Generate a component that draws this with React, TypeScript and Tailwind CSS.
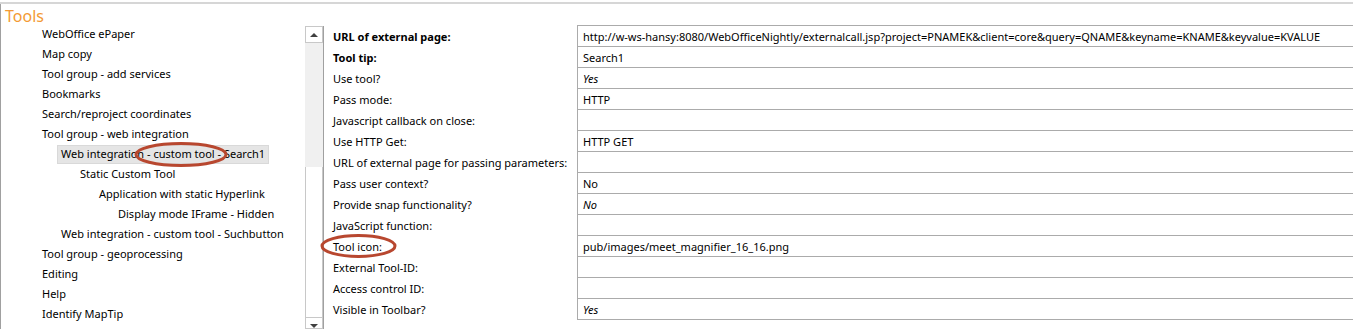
import React from 'react';

type TreeItem = { label: string; level: number; selected?: boolean };

const treeItems: TreeItem[] = [
  { label: 'WebOffice ePaper', level: 1 },
  { label: 'Map copy', level: 1 },
  { label: 'Tool group - add services', level: 1 },
  { label: 'Bookmarks', level: 1 },
  { label: 'Search/reproject coordinates', level: 1 },
  { label: 'Tool group - web integration', level: 1 },
  { label: 'Web integration - custom tool - Search1', level: 2, selected: true },
  { label: 'Static Custom Tool', level: 3 },
  { label: 'Application with static Hyperlink', level: 4 },
  { label: 'Display mode IFrame - Hidden', level: 5 },
  { label: 'Web integration - custom tool - Suchbutton', level: 2 },
  { label: 'Tool group - geoprocessing', level: 1 },
  { label: 'Editing', level: 1 },
  { label: 'Help', level: 1 },
  { label: 'Identify MapTip', level: 1 },
];

type Prop = { label: string; value?: string; bold?: boolean; italic?: boolean };

const props: Prop[] = [
  {
    label: 'URL of external page:',
    value:
      'http://w-ws-hansy:8080/WebOfficeNightly/externalcall.jsp?project=PNAMEK&client=core&query=QNAME&keyname=KNAME&keyvalue=KVALUE',
    bold: true,
  },
  { label: 'Tool tip:', value: 'Search1', bold: true },
  { label: 'Use tool?', value: 'Yes', italic: true },
  { label: 'Pass mode:', value: 'HTTP' },
  { label: 'Javascript callback on close:' },
  { label: 'Use HTTP Get:', value: 'HTTP GET' },
  { label: 'URL of external page for passing parameters:' },
  { label: 'Pass user context?', value: 'No' },
  { label: 'Provide snap functionality?', value: 'No', italic: true },
  { label: 'JavaScript function:' },
  { label: 'Tool icon:', value: 'pub/images/meet_magnifier_16_16.png' },
  { label: 'External Tool-ID:' },
  { label: 'Access control ID:' },
  { label: 'Visible in Toolbar?', value: 'Yes', italic: true },
];

// text lands at 42 / 61 / 80 / 99 / 118px
const indent: Record<number, string> = {
  1: 'pl-[37px]',
  2: 'pl-[56px]',
  3: 'pl-[75px]',
  4: 'pl-[94px]',
  5: 'pl-[113px]',
};

const App: React.FC = () => {
  return (
    <div className="relative w-[1353px] h-[329px] overflow-hidden bg-white text-[11px] text-black font-['Noto_Sans',sans-serif]">
      <div className="h-[2px]" />
      <div className="h-[2px] bg-[#d6d6d6]" />

      <div className="flex flex-col h-[325px] border-l border-[#a0a0a0]">
        <div className="h-[20px] pl-[4px] pt-[2px] text-[16px] leading-[20px] text-[#f39a34]">Tools</div>

        <div className="flex flex-1 min-h-0">
          {/* tree */}
          <div className="w-[304px] shrink-0 flex flex-col">
            {treeItems.map((item) => (
              <div key={item.label} className={`h-[20px] flex items-center pt-[1px] ${indent[item.level]}`}>
                <span
                  className={`h-[19px] flex items-center px-[3px] border whitespace-nowrap ${
                    item.selected ? 'bg-[#e5e5e5] border-[#d9d9d9]' : 'border-transparent'
                  }`}
                >
                  {item.label}
                </span>
              </div>
            ))}
          </div>

          {/* scrollbar */}
          <div className="w-[18px] shrink-0 mt-[2px] flex flex-col bg-[#f0f0f0]">
            <div className="h-[17px] flex items-center justify-center bg-white border border-[#c8c8c8]">
              <div className="w-0 h-0 border-l-[4px] border-r-[4px] border-b-[4px] border-l-transparent border-r-transparent border-b-[#404040]" />
            </div>
            <div className="h-[124px]" />
            <div className="h-[150px] bg-white border-x border-[#c8c8c8]" />
            <div className="flex-1 flex items-start justify-center bg-white border border-[#c8c8c8] pt-[6px]">
              <div className="w-0 h-0 border-l-[4px] border-r-[4px] border-t-[4px] border-l-transparent border-r-transparent border-t-[#404040]" />
            </div>
          </div>

          {/* property grid */}
          <div className="flex-1 min-w-0 mt-[2px] border-l border-[#a0a0a0]">
            <div className="mt-[-1px]">
              {props.map((p, i) => (
                <div key={p.label} className="flex h-[21px]">
                  <div className={`w-[253px] shrink-0 pl-[9px] pt-[4px] whitespace-nowrap ${p.bold ? 'font-bold' : ''}`}>
                    {p.label}
                  </div>
                  <div
                    className={`flex-1 min-w-0 pl-[5px] pt-[3px] whitespace-nowrap border-l border-t border-[#ababab] ${
                      i === props.length - 1 ? 'border-b h-[22px]' : ''
                    } ${p.italic ? 'italic' : ''}`}
                  >
                    {p.value}
                  </div>
                </div>
              ))}
            </div>
          </div>
        </div>
      </div>

      {/* hand-drawn highlight marks */}
      <svg className="absolute left-0 top-0 pointer-events-none" width="1353" height="329">
        <ellipse cx="181" cy="154.5" rx="45" ry="11" fill="none" stroke="#b8472f" strokeWidth="3" />
        <ellipse cx="358.5" cy="246" rx="36.5" ry="10.5" fill="none" stroke="#b8472f" strokeWidth="3" />
      </svg>
    </div>
  );
};

export default App;
